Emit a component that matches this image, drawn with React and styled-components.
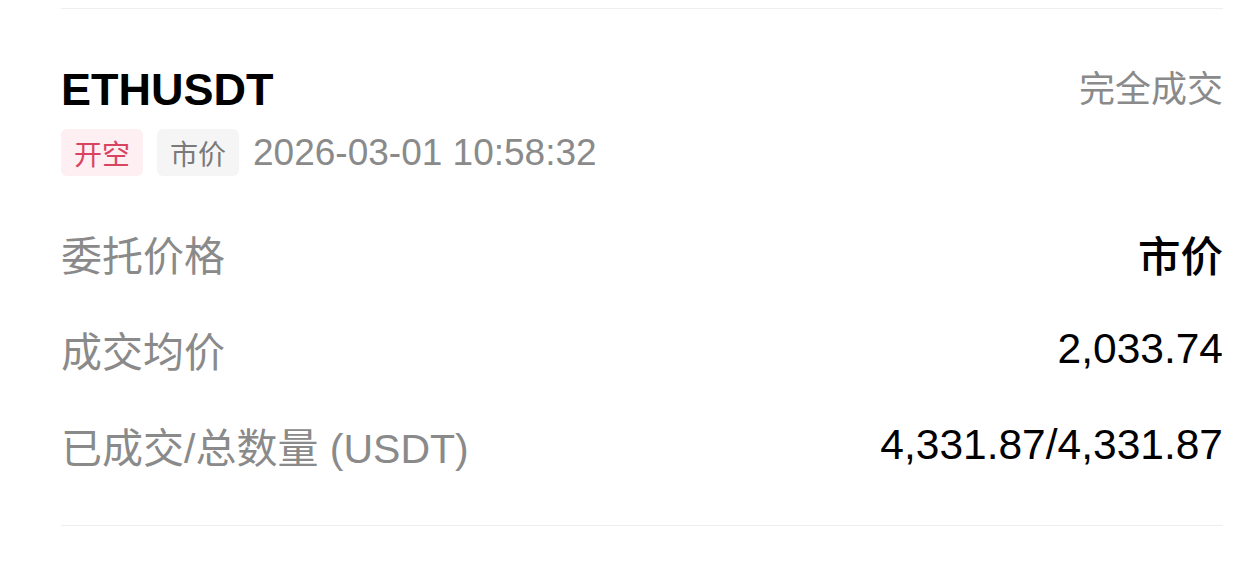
import React from "react";
import styled, { createGlobalStyle } from "styled-components";

const GlobalStyle = createGlobalStyle`
  body {
    margin: 0;
    background: #ffffff;
    font-family: "Liberation Sans", "Noto Sans CJK SC", sans-serif;
  }
`;

const Page = styled.div`
  padding: 8px 31px 0 61px;
`;

const Divider = styled.div`
  height: 1px;
  background: #eeeeee;
`;

const Header = styled.div`
  padding-top: 54px;
`;

const TitleRow = styled.div`
  display: flex;
  justify-content: space-between;
  align-items: center;
`;

const Symbol = styled.div`
  font-size: 45px;
  line-height: 54px;
  font-weight: 700;
  color: #000000;
`;

const Status = styled.div`
  font-size: 36px;
  line-height: 54px;
  color: #8a8a8a;
`;

const MetaRow = styled.div`
  display: flex;
  align-items: center;
  gap: 14px;
  margin-top: 12px;
  height: 47px;
`;

const Tag = styled.span`
  display: inline-flex;
  align-items: center;
  height: 47px;
  padding: 0 13px;
  border-radius: 6px;
  font-size: 28px;
  background: ${(p) => (p.$tone === "red" ? "#fdeff2" : "#f5f5f5")};
  color: ${(p) => (p.$tone === "red" ? "#d9435f" : "#7a7a7a")};
`;

const Time = styled.span`
  font-size: 37px;
  color: #8a8a8a;
`;

const Rows = styled.div`
  margin-top: 29px;
  padding-bottom: 32px;
`;

const Row = styled.div`
  display: flex;
  justify-content: space-between;
  align-items: center;
  height: 96px;
`;

const Label = styled.span`
  font-size: 41px;
  color: #8a8a8a;
`;

const Value = styled.span`
  font-size: 42.5px;
  font-weight: 500;
  color: #000000;
`;

const rows = [
  { label: "委托价格", value: "市价" },
  { label: "成交均价", value: "2,033.74" },
  { label: "已成交/总数量 (USDT)", value: "4,331.87/4,331.87" },
];

export default function App() {
  return (
    <>
      <GlobalStyle />
      <Page>
        <Divider />
        <Header>
          <TitleRow>
            <Symbol>ETHUSDT</Symbol>
            <Status>完全成交</Status>
          </TitleRow>
          <MetaRow>
            <Tag $tone="red">开空</Tag>
            <Tag>市价</Tag>
            <Time>2026-03-01 10:58:32</Time>
          </MetaRow>
        </Header>
        <Rows>
          {rows.map((r) => (
            <Row key={r.label}>
              <Label>{r.label}</Label>
              <Value>{r.value}</Value>
            </Row>
          ))}
        </Rows>
        <Divider />
      </Page>
    </>
  );
}
